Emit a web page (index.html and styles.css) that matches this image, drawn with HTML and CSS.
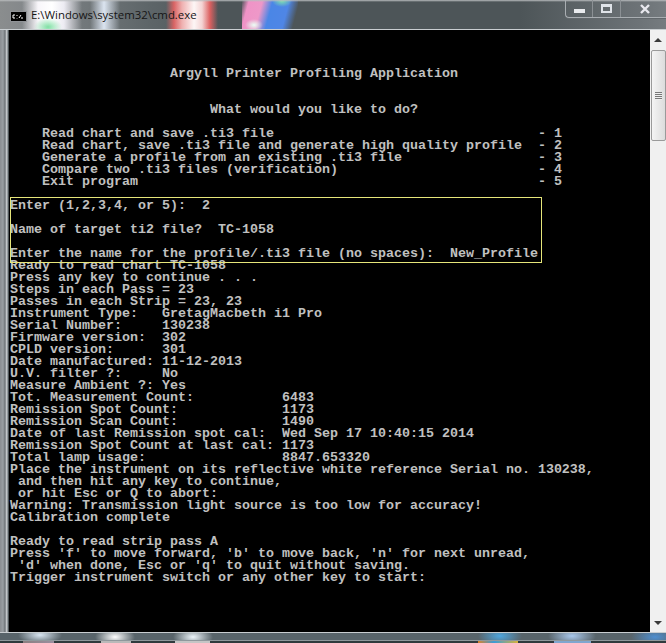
FILE: index.html
```html
<!DOCTYPE html>
<html lang="en">
<head>
<meta charset="utf-8">
<title>cmd.exe</title>
<link rel="stylesheet" href="styles.css">
</head>
<body>
<div class="window">
  <header class="titlebar">
    <svg class="app-icon" width="15" height="9" viewBox="0 0 15 9" aria-hidden="true">
      <rect width="15" height="9" fill="#000"/>
      <path d="M2 3h2M2 3v3M2 6h2M6 3v1M6 6v0.5M8 6l2-3M10 6h2" stroke="#fff" stroke-width="1" fill="none"/>
    </svg>
    <span class="title">E:\Windows\system32\cmd.exe</span>
    <div class="controls">
      <div class="ctl ctl-min"><span class="min-glyph"></span></div>
      <div class="ctl ctl-max"><span class="max-glyph"></span></div>
      <div class="ctl ctl-close">
        <svg width="10" height="10" viewBox="0 0 10 10" aria-hidden="true"><path d="M1 1l8 8M9 1l-8 8" stroke="#e8e8ee" stroke-width="2.4" fill="none"/></svg>
      </div>
    </div>
  </header>
  <div class="client">
    <main class="console">
<pre class="output">



                    Argyll Printer Profiling Application


                         What would you like to do?

    Read chart and save .ti3 file                                 - 1
    Read chart, save .ti3 file and generate high quality profile  - 2
    Generate a profile from an existing .ti3 file                 - 3
    Compare two .ti3 files (verification)                         - 4
    Exit program                                                  - 5

Enter (1,2,3,4, or 5):  2

Name of target ti2 file?  TC-1058

Enter the name for the profile/.ti3 file (no spaces):  New_Profile
Ready to read chart TC-1058
Press any key to continue . . .
Steps in each Pass = 23
Passes in each Strip = 23, 23
Instrument Type:   GretagMacbeth i1 Pro
Serial Number:     130238
Firmware version:  302
CPLD version:      301
Date manufactured: 11-12-2013
U.V. filter ?:     No
Measure Ambient ?: Yes
Tot. Measurement Count:           6483
Remission Spot Count:             1173
Remission Scan Count:             1490
Date of last Remission spot cal:  Wed Sep 17 10:40:15 2014
Remission Spot Count at last cal: 1173
Total lamp usage:                 8847.653320
Place the instrument on its reflective white reference Serial no. 130238,
 and then hit any key to continue,
 or hit Esc or Q to abort:
Warning: Transmission light source is too low for accuracy!
Calibration complete

Ready to read strip pass A
Press 'f' to move forward, 'b' to move back, 'n' for next unread,
 'd' when done, Esc or 'q' to quit without saving.
Trigger instrument switch or any other key to start:</pre>
      <div class="highlight"></div>
    </main>
    <aside class="scrollbar">
      <span class="arrow arrow-up"></span>
      <div class="thumb"><span class="grip"></span></div>
      <span class="arrow arrow-down"></span>
    </aside>
  </div>
  <footer class="bottom-frame"></footer>
  <div class="desktop-strip"></div>
</div>
</body>
</html>
```

FILE: styles.css
```css
* { box-sizing: border-box; }

html, body {
  margin: 0;
  padding: 0;
  height: 643px;
  overflow: hidden;
  background: #000;
}

.window {
  width: 666px;
  height: 643px;
  display: flex;
  flex-direction: column;
  background:
    linear-gradient(90deg, #8a8e92 0, #9aa0a4 3px, #6e7478 5px, #dfe3e6 7px, #4d5558 8px) left top / 9px 100% no-repeat,
    #4f575a;
}

.titlebar {
  height: 30px;
  flex: none;
  display: flex;
  align-items: flex-start;
  padding-left: 11px;
  border-bottom: 1px solid #c9ced1;
  background:
    linear-gradient(180deg, #b9bcbe 0, rgba(111,118,121,0) 2px),
    radial-gradient(ellipse 9px 6px at 254px 25px, #eafff5 0, rgba(232,255,244,0) 100%),
    radial-gradient(ellipse 10px 6px at 282px 1px, #7fe0b0 0, rgba(127,224,176,0) 100%),
    linear-gradient(105deg, rgba(238,152,200,0) 0, #ef93c6 7px, #ee98c8 20px, #4a86e6 30px, #4f86e6 46px, rgba(79,134,230,0) 56px) 242px 0 / 56px 29px no-repeat,
    linear-gradient(90deg, rgba(214,92,92,0) 0, #d96464 8px, #efb0b0 16px, #fdf6f6 28px, #f4d4d4 36px, #dc6060 44px, rgba(214,92,92,0) 52px) 166px 0 / 52px 29px no-repeat,
    radial-gradient(ellipse 14px 9px at 48px 27px, #7fe0a4 0, rgba(127,224,164,0) 100%),
    linear-gradient(90deg, rgba(250,250,252,0) 0, #f8f6fa 16px, #fff 30px, #ecebf2 42px, rgba(240,240,245,0) 60px) 22px 0 / 60px 29px no-repeat,
    linear-gradient(90deg, rgba(200,215,232,0) 0, #dbe4f0 14px, rgba(200,215,232,0) 30px) 90px 0 / 30px 29px no-repeat,
    linear-gradient(90deg, #8a8d8e 0, #83878a 30px, #5d6568 150px, #4d5558 220px, #4d5558 520px, #6d7377 640px, #767c80 666px);
}

.app-icon {
  flex: none;
  margin-top: 12px;
  outline: 1px solid #8f9296;
}

.title {
  margin-left: 5px;
  margin-top: 7px;
  font: 11.4px/16px "Open Sans", "Liberation Sans", sans-serif;
  color: #161616;
  white-space: nowrap;
}

.controls {
  margin-left: auto;
  width: 101px;
  height: 18px;
  display: flex;
  border: 1px solid #a9aeb2;
  border-top: 0;
  border-right: 0;
  border-bottom-left-radius: 4px;
  box-shadow: 0 1px 0 #62686c;
}

.ctl {
  height: 100%;
  display: flex;
  justify-content: center;
  border-right: 1px solid #8b9094;
}

.ctl-min { width: 27px; }
.ctl-max { width: 28px; }
.ctl-close {
  flex: 1;
  border-right: 0;
  padding: 4px 0 0 19px;
  justify-content: flex-start;
}

.min-glyph {
  width: 11px;
  height: 4px;
  margin-top: 9px;
  background: #e9ebee;
}

.max-glyph {
  width: 11px;
  height: 9px;
  margin-top: 4px;
  border: 2px solid #dfe3e8;
  border-top-width: 3px;
}

.client {
  flex: 1;
  min-height: 0;
  display: flex;
  padding-left: 9px;
}

.console {
  position: relative;
  flex: 1;
  min-width: 0;
  background: #000;
  overflow: hidden;
}

.output {
  margin: 0;
  padding: 2px 0 0 1px;
  font: bold 13.333px/12px "Liberation Mono", "DejaVu Sans Mono", monospace;
  color: #c0c0c0;
  white-space: pre;
}

.highlight {
  position: absolute;
  left: 1px;
  top: 167px;
  width: 532px;
  height: 66px;
  border: 1px solid #e6e67a;
}

.scrollbar {
  width: 16px;
  flex: none;
  display: flex;
  flex-direction: column;
  align-items: center;
  background: #f0f0f0;
  padding: 8px 0 7px;
}

.arrow {
  width: 0;
  height: 0;
  flex: none;
  border-left: 4px solid transparent;
  border-right: 4px solid transparent;
}

.arrow-up { border-bottom: 4px solid #3a3a3a; }
.arrow-down { border-top: 4px solid #3a3a3a; margin-top: auto; }

.thumb {
  width: 15px;
  height: 91px;
  margin-top: 8px;
  border: 1px solid #9a9a9a;
  border-radius: 2px;
  background: linear-gradient(90deg, #f4f4f4, #dcdcdc);
  display: flex;
  align-items: center;
  justify-content: center;
}

.grip {
  width: 7px;
  height: 8px;
  background: repeating-linear-gradient(180deg, #777 0 1px, #eee 1px 2px);
}

.bottom-frame {
  height: 8px;
  flex: none;
  border-top: 1px solid #c9ced1;
  background:
    radial-gradient(ellipse 22px 9px at 40px 2px, #d9e6f2 0, rgba(200,220,240,0) 100%),
    radial-gradient(ellipse 20px 10px at 115px 4px, #fff 0, rgba(255,255,255,0) 100%),
    radial-gradient(ellipse 20px 10px at 193px 4px, #eef6fb 0, rgba(240,246,251,0) 100%),
    radial-gradient(ellipse 22px 10px at 500px 3px, #4fa6dd 0, rgba(79,166,221,0) 100%),
    radial-gradient(ellipse 24px 10px at 572px 3px, #a9c8ec 0, rgba(169,200,236,0) 100%),
    radial-gradient(ellipse 24px 10px at 655px 4px, #4f8fd0 0, rgba(79,143,208,0) 100%),
    #58646a;
}

.desktop-strip {
  height: 3px;
  flex: none;
  border-top: 1px solid #8f989c;
  background:
    linear-gradient(90deg, #8b7f80, #9a8fa0) 23px 0 / 31px 100% no-repeat,
    linear-gradient(#b9b9b9, #b9b9b9) 101px 0 / 30px 100% no-repeat,
    linear-gradient(#c5c5c5, #c5c5c5) 175px 0 / 35px 100% no-repeat,
    linear-gradient(90deg, #d9822b, #3a9bd8 40%, #d8b23a) 478px 0 / 40px 100% no-repeat,
    linear-gradient(#7fa6cf, #7fa6cf) 554px 0 / 37px 100% no-repeat,
    #2f3a3d;
}
```
